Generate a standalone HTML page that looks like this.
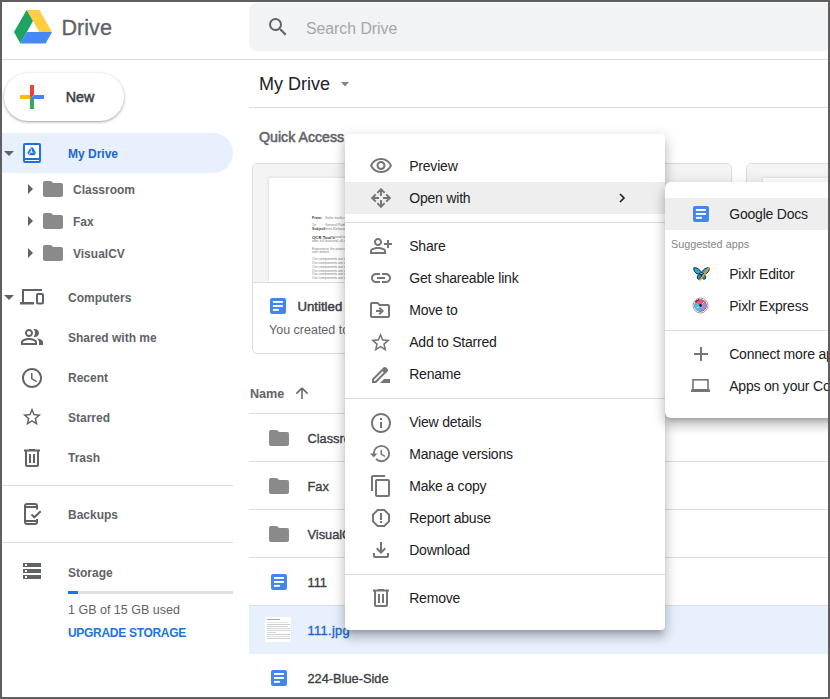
<!DOCTYPE html>
<html><head><meta charset="utf-8">
<style>
*{box-sizing:border-box}
html,body{margin:0;padding:0}
body{width:830px;height:699px;overflow:hidden;position:relative;background:#fff;font-family:"Liberation Sans",sans-serif;color:#202124}
.a{position:absolute}
.t{position:absolute;white-space:nowrap;line-height:1}
#frame{position:absolute;left:0;top:0;width:830px;height:699px;border:2px solid #5f5f5f;z-index:100}
.hl{position:absolute;height:1px;background:#dadce0}
.side{font-size:12px;font-weight:700;color:#5f6368}
.mtx{position:absolute;font-size:14px;letter-spacing:-0.2px;color:#202124;white-space:nowrap;line-height:1}
.ftx{position:absolute;font-size:12.8px;color:#3c4043;-webkit-text-stroke:0.35px currentColor;white-space:nowrap;line-height:1}
.dl{position:absolute;height:1px;background:#b8b8b8}
</style></head><body>
<div id="frame"></div>

<svg class="a" style="left:14px;top:10px" width="38" height="34" viewBox="0 0 38 34">
  <path d="M12.6 0 L25.4 0 L38 22 L25.4 22 Z" fill="#ffcd40"/>
  <path d="M12.6 0 L19 11 L6.4 33.5 L0 22 Z" fill="#1ea362"/>
  <path d="M6.4 33.5 L12.8 22 L38 22 L31.6 33.5 Z" fill="#4688f4"/>
</svg>
<div class="t" style="left:61.5px;top:16.8px;font-size:21.6px;color:#5f6368;-webkit-text-stroke:0.35px #5f6368">Drive</div>
<div class="hl" style="left:0;top:59px;width:830px"></div>
<div class="a" style="left:249px;top:3px;width:600px;height:48px;background:#f1f3f4;border-radius:8px"></div>

<svg class="a" style="left:266px;top:15px" width="24" height="24" viewBox="0 0 24 24"><path fill="#5f6368" d="M15.5 14h-.79l-.28-.27A6.471 6.471 0 0 0 16 9.5 6.5 6.5 0 1 0 9.5 16c1.61 0 3.09-.59 4.23-1.57l.27.28v.79l5 4.99L20.49 19l-4.99-5zm-6 0C7.01 14 5 11.99 5 9.5S7.01 5 9.5 5 14 7.01 14 9.5 11.99 14 9.5 14z" /></svg>
<div class="t" style="left:306px;top:20.8px;font-size:15.8px;color:#a4a7aa">Search Drive</div>
<div class="a" style="left:4px;top:73px;width:120px;height:48px;border-radius:24px;background:#fff;box-shadow:0 1px 2px 0 rgba(60,64,67,.3),0 1px 3px 1px rgba(60,64,67,.15)"></div>
<svg class="a" style="left:20px;top:85px" width="24" height="24" viewBox="0 0 24 24">
  <path d="M10 0h4v10L10 14z" fill="#ea4335"/>
  <rect x="10" y="14" width="4" height="10" fill="#34a853"/>
  <rect x="0" y="10" width="10" height="4" fill="#fbbc04"/>
  <path d="M14 10h10v4H10z" fill="#4285f4"/>
</svg>
<div class="t" style="left:65.8px;top:90px;font-size:14.3px;font-weight:400;color:#3c4043;-webkit-text-stroke:0.5px #3c4043">New</div>
<div class="a" style="left:2px;top:133px;width:231px;height:40px;background:#e8f0fe;border-radius:0 20px 20px 0"></div>

<svg class="a" style="left:4px;top:151px" width="10" height="5" viewBox="0 0 10 5"><path d="M0 0h10L5 5z" fill="#5f6368"/></svg>
<svg class="a" style="left:23px;top:143px" width="18" height="20" viewBox="0 0 18 20"><rect x="1" y="1" width="16" height="17" fill="#fff"/><path fill="#1a73e8" fill-rule="evenodd" d="M2 0h14a2 2 0 0 1 2 2v16a2 2 0 0 1-2 2H2a2 2 0 0 1-2-2V2a2 2 0 0 1 2-2zM2 2v13h14V2zM2 17v1h14v-1z"/>
<g transform="translate(4.1,4.6) scale(0.232)"><path d="M12.6 0 L25.4 0 L38 22 L25.4 22 Z" fill="#1a73e8"/><path d="M6.4 33.5 L12.8 22 L38 22 L31.6 33.5 Z" fill="#1a73e8"/><path d="M12.6 0 L19 11 L6.4 33.5 L0 22 Z" fill="#1a73e8" stroke="#fff" stroke-width="3"/><path d="M8 8 L4 15" stroke="#fff" stroke-width="0"/></g></svg>
<div class="t side" style="left:68px;top:148px;color:#1967d2">My Drive</div>
<svg class="a" style="left:28px;top:184px" width="5" height="10" viewBox="0 0 5 10"><path d="M0 0v10l5-5z" fill="#5f6368"/></svg>
<svg class="a" style="left:43px;top:181px" width="20" height="16" viewBox="0 0 20 16"><path d="M8 0H2C.9 0 0 .9 0 2v12c0 1.1.9 2 2 2h16c1.1 0 2-.9 2-2V4c0-1.1-.9-2-2-2h-8L8 0z" fill="#8a8a8a"/></svg>
<div class="t side" style="left:73px;top:184px">Classroom</div>
<svg class="a" style="left:28px;top:216px" width="5" height="10" viewBox="0 0 5 10"><path d="M0 0v10l5-5z" fill="#5f6368"/></svg>
<svg class="a" style="left:43px;top:213px" width="20" height="16" viewBox="0 0 20 16"><path d="M8 0H2C.9 0 0 .9 0 2v12c0 1.1.9 2 2 2h16c1.1 0 2-.9 2-2V4c0-1.1-.9-2-2-2h-8L8 0z" fill="#8a8a8a"/></svg>
<div class="t side" style="left:73px;top:216px">Fax</div>
<svg class="a" style="left:28px;top:248px" width="5" height="10" viewBox="0 0 5 10"><path d="M0 0v10l5-5z" fill="#5f6368"/></svg>
<svg class="a" style="left:43px;top:245px" width="20" height="16" viewBox="0 0 20 16"><path d="M8 0H2C.9 0 0 .9 0 2v12c0 1.1.9 2 2 2h16c1.1 0 2-.9 2-2V4c0-1.1-.9-2-2-2h-8L8 0z" fill="#8a8a8a"/></svg>
<div class="t side" style="left:73px;top:248px">VisualCV</div>
<svg class="a" style="left:4px;top:295px" width="10" height="5" viewBox="0 0 10 5"><path d="M0 0h10L5 5z" fill="#5f6368"/></svg>
<svg class="a" style="left:20px;top:289px" width="24" height="16" viewBox="0 0 24 16"><path fill="#5f6368" d="M2 0h20v2H4v11H2zM0 13h14v2.5H0z"/><rect x="17" y="5" width="6" height="9.5" rx="1" fill="none" stroke="#5f6368" stroke-width="2"/></svg>
<div class="t side" style="left:68px;top:292px">Computers</div>
<svg class="a" style="left:20px;top:325px" width="24" height="24" viewBox="0 0 24 24"><path fill="#5f6368" d="M15 8c0-1.42-.5-2.73-1.33-3.76.42-.14.86-.24 1.33-.24 2.21 0 4 1.79 4 4s-1.79 4-4 4c-.43 0-.84-.09-1.23-.21-.03-.01-.06-.02-.1-.03A5.98 5.98 0 0 0 15 8zm1.66 5.13C18.03 14.06 19 15.32 19 17v3h4v-3c0-2.18-3.58-3.47-6.34-3.87zM9 4c-2.21 0-4 1.79-4 4s1.79 4 4 4 4-1.79 4-4-1.79-4-4-4zm0 6c-1.1 0-2-.9-2-2s.9-2 2-2 2 .9 2 2-.9 2-2 2zm0 3c-2.67 0-8 1.34-8 4v3h16v-3c0-2.66-5.33-4-8-4zm6 5H3v-.99C3.2 16.29 6.3 15 9 15s5.8 1.29 6 2v1z" /></svg>
<div class="t side" style="left:68px;top:332px">Shared with me</div>
<svg class="a" style="left:20px;top:366px" width="24" height="24" viewBox="0 0 24 24"><path fill="#5f6368" d="M11.99 2C6.47 2 2 6.48 2 12s4.47 10 9.99 10C17.52 22 22 17.520 22 12S17.52 2 11.99 2zM12 20c-4.42 0-8-3.58-8-8s3.58-8 8-8 8 3.58 8 8-3.58 8-8 8zm.5-13H11v6l5.25 3.15.75-1.23-4.5-2.67z" /></svg>
<div class="t side" style="left:68px;top:372px">Recent</div>
<svg class="a" style="left:20.8px;top:406.2px" width="22" height="22" viewBox="0 0 24 24"><path fill="#5f6368" d="M22 9.24l-7.19-.62L12 2 9.19 8.63 2 9.24l5.46 4.73L5.82 21 12 17.27 18.18 21l-1.63-7.03L22 9.24zM12 15.4l-3.76 2.27 1-4.28-3.32-2.88 4.38-.38L12 6.1l1.71 4.04 4.38.38-3.32 2.88 1 4.28L12 15.4z"/></svg>
<div class="t side" style="left:68px;top:412px">Starred</div>
<svg class="a" style="left:20px;top:445.5px" width="24" height="24" viewBox="0 0 24 24"><path fill="#5f6368" d="M15 3.5V3H9v.5H4v2h1V19c0 1.1.9 2 2 2h10c1.1 0 2-.9 2-2V5.5h1v-2h-5zM17 19H7V5.5h10V19zM9 8h2v9H9zm4 0h2v9h-2z" /></svg>
<div class="t side" style="left:68px;top:452px">Trash</div>
<div class="hl" style="left:2px;top:485px;width:231px"></div>
<svg class="a" style="left:24px;top:503px" width="18" height="22" viewBox="0 0 18 22"><path fill="none" stroke="#5f6368" stroke-width="2" d="M13 6.5V3a2 2 0 0 0-2-2H3a2 2 0 0 0-2 2v16a2 2 0 0 0 2 2h8a2 2 0 0 0 2-2v-3M1 4h12M1 18h12M7.5 11.5l2.8 2.8 6.4-6"/></svg>
<div class="t side" style="left:68px;top:509px">Backups</div>
<div class="hl" style="left:2px;top:542px;width:231px"></div>
<svg class="a" style="left:23px;top:563px" width="18" height="16" viewBox="0 0 18 16"><path fill="#5f6368" fill-rule="evenodd" d="M0 0h18v4H0zM2 1v2h2V1zM0 6h18v4H0zM2 7v2h2V7zM0 12h18v4H0zM2 13v2h2v-2z"/></svg>
<div class="t side" style="left:68px;top:567px">Storage</div>
<div class="a" style="left:68px;top:591px;width:165px;height:3px;background:#e0e0e0"></div>
<div class="a" style="left:68px;top:591px;width:10px;height:3px;background:#1a73e8"></div>
<div class="t" style="left:68px;top:604px;font-size:12.5px;color:#5f6368">1 GB of 15 GB used</div>
<div class="t" style="left:68px;top:627px;font-size:12px;font-weight:700;color:#1a73e8;letter-spacing:-0.3px">UPGRADE STORAGE</div>
<div class="t" style="left:259px;top:75px;font-size:18px;color:#202124">My Drive</div>
<svg class="a" style="left:341px;top:82px" width="8" height="5" viewBox="0 0 8 5"><path d="M0 0h8L4 4.5z" fill="#80868b"/></svg>
<div class="hl" style="left:249px;top:107px;width:600px"></div>
<div class="t" style="left:259px;top:129.6px;font-size:14.2px;font-weight:400;color:#5f6368;-webkit-text-stroke:0.55px #5f6368">Quick Access</div>
<div class="a" style="left:252px;top:163px;width:233px;height:191px;border:1px solid #dadce0;border-radius:5px;overflow:hidden"><div class="a" style="left:0;top:0;width:231px;height:119px;background:#f4f4f4;border-bottom:1px solid #dadce0"></div><div class="a" style="left:16px;top:14px;width:215px;height:104px;background:#fff;box-shadow:-1px -1px 2px rgba(0,0,0,.08)"></div><div class="t" style="left:59px;top:52.7px;font-size:3.6px;font-weight:700;color:#333">From:</div><div class="t" style="left:72px;top:52.7px;font-size:3.4px;font-weight:400;color:#808080">Sales mailto:sales@ocrtools</div><div class="t" style="left:59px;top:60.2px;font-size:3.4px;font-weight:400;color:#808080">To:</div><div class="t" style="left:72px;top:60.2px;font-size:3.4px;font-weight:400;color:#808080">General Public</div><div class="t" style="left:59px;top:64.2px;font-size:3.6px;font-weight:700;color:#444">Subject:</div><div class="t" style="left:70.5px;top:64.2px;font-size:3.4px;font-weight:400;color:#808080">Press Release</div><div class="t" style="left:59px;top:71.7px;font-size:4.3px;font-weight:700;color:#333">OCR Tool's</div><div class="t" style="left:80px;top:72.2px;font-size:3.4px;font-weight:400;color:#808080">proud to announce</div><div class="t" style="left:59px;top:76.2px;font-size:3.4px;font-weight:400;color:#808080">offer full-featured, all-in-one OCR</div><div class="t" style="left:59px;top:83.7px;font-size:3.4px;font-weight:400;color:#808080">Experience the power of OCR like</div><div class="t" style="left:59px;top:87.2px;font-size:3.4px;font-weight:400;color:#808080">ever before.</div><div class="t" style="left:59px;top:94.0px;font-size:3.4px;font-weight:400;color:#808080">Our components are to be used with a wide range of</div><div class="t" style="left:59px;top:97.8px;font-size:3.4px;font-weight:400;color:#808080">Our components are to be used with a wide range of</div><div class="t" style="left:59px;top:101.7px;font-size:3.4px;font-weight:400;color:#808080">Our components are to be used with a wide range of</div><div class="t" style="left:59px;top:105.5px;font-size:3.4px;font-weight:400;color:#808080">Our components are to be used with a wide range of</div><div class="t" style="left:59px;top:109.2px;font-size:3.4px;font-weight:400;color:#808080">Our components are to be used with a wide range of</div><div class="t" style="left:59px;top:112.9px;font-size:3.4px;font-weight:400;color:#808080">Our components are to be used with a wide range of</div><svg class="a" style="left:17px;top:134px" width="16" height="16" viewBox="0 0 16 16"><rect width="16" height="16" rx="2" fill="#4285f4"/><rect x="2.9" y="3" width="10" height="1.9" fill="#fff"/><rect x="2.9" y="7" width="10" height="1.9" fill="#fff"/><rect x="2.9" y="10.9" width="6" height="1.9" fill="#fff"/></svg><div class="t" style="left:44.5px;top:136.3px;font-size:13.2px;font-weight:400;color:#3c4043;-webkit-text-stroke:0.45px #3c4043">Untitled</div><div class="t" style="left:16px;top:160.2px;font-size:12.5px;color:#5f6368">You created today</div></div>
<div class="a" style="left:499px;top:163px;width:233px;height:191px;border:1px solid #dadce0;border-radius:5px;overflow:hidden"><div class="a" style="left:0;top:0;width:231px;height:119px;background:#f4f4f4;border-bottom:1px solid #dadce0"></div></div>
<div class="a" style="left:746px;top:163px;width:233px;height:191px;border:1px solid #dadce0;border-radius:5px;overflow:hidden"><div class="a" style="left:0;top:0;width:231px;height:119px;background:#f4f4f4;border-bottom:1px solid #dadce0"></div><div class="a" style="left:16px;top:14px;width:215px;height:104px;background:#fff;box-shadow:-1px -1px 2px rgba(0,0,0,.08)"></div></div>
<div class="t" style="left:250px;top:387.5px;font-size:12.6px;font-weight:700;color:#5f6368">Name</div>
<svg class="a" style="left:294px;top:385px" width="16" height="16" viewBox="0 0 16 16"><path d="M8 3 L2.4 8.6 M8 3 L13.6 8.6 M8 3 V14" stroke="#5f6368" stroke-width="1.5" fill="none"/></svg>
<div class="hl" style="left:249px;top:413px;width:600px"></div>
<div class="a" style="left:249px;top:414px;width:600px;height:48px;border-bottom:1px solid #dadce0"></div>
<svg class="a" style="left:269px;top:430px" width="20" height="16" viewBox="0 0 20 16"><path d="M8 0H2C.9 0 0 .9 0 2v12c0 1.1.9 2 2 2h16c1.1 0 2-.9 2-2V4c0-1.1-.9-2-2-2h-8L8 0z" fill="#8a8a8a"/></svg>
<div class="ftx" style="left:307.5px;top:433px;color:#3c4043;">Classroom</div>
<div class="a" style="left:249px;top:462px;width:600px;height:48px;border-bottom:1px solid #dadce0"></div>
<svg class="a" style="left:269px;top:478px" width="20" height="16" viewBox="0 0 20 16"><path d="M8 0H2C.9 0 0 .9 0 2v12c0 1.1.9 2 2 2h16c1.1 0 2-.9 2-2V4c0-1.1-.9-2-2-2h-8L8 0z" fill="#8a8a8a"/></svg>
<div class="ftx" style="left:307.5px;top:481px;color:#3c4043;">Fax</div>
<div class="a" style="left:249px;top:510px;width:600px;height:48px;border-bottom:1px solid #dadce0"></div>
<svg class="a" style="left:269px;top:526px" width="20" height="16" viewBox="0 0 20 16"><path d="M8 0H2C.9 0 0 .9 0 2v12c0 1.1.9 2 2 2h16c1.1 0 2-.9 2-2V4c0-1.1-.9-2-2-2h-8L8 0z" fill="#8a8a8a"/></svg>
<div class="ftx" style="left:307.5px;top:529px;color:#3c4043;">VisualCV</div>
<div class="a" style="left:249px;top:558px;width:600px;height:48px;border-bottom:1px solid #dadce0"></div>
<svg class="a" style="left:271px;top:574px" width="16" height="16" viewBox="0 0 16 16"><rect width="16" height="16" rx="2" fill="#4285f4"/><rect x="2.9" y="3" width="10" height="1.9" fill="#fff"/><rect x="2.9" y="7" width="10" height="1.9" fill="#fff"/><rect x="2.9" y="10.9" width="6" height="1.9" fill="#fff"/></svg>
<div class="ftx" style="left:307.5px;top:577px;color:#3c4043;">111</div>
<div class="a" style="left:249px;top:606px;width:600px;height:48px;background:#e8f0fe;border-bottom:1px solid #e8f0fe"></div>
<div class="a" style="left:265px;top:617px;width:26px;height:25px;background:#fff"></div>
<div class="a" style="left:267px;top:619px;width:13px;height:1px;background:#aaa"></div>
<div class="a" style="left:267px;top:621.5px;width:20px;height:1px;background:#e4e4e4"></div>
<div class="a" style="left:267px;top:624px;width:23px;height:1px;background:#cfcfcf"></div>
<div class="a" style="left:267px;top:626px;width:21px;height:1px;background:#cfcfcf"></div>
<div class="a" style="left:267px;top:628px;width:23px;height:1px;background:#d6d6d6"></div>
<div class="a" style="left:267px;top:630px;width:23px;height:1px;background:#d6d6d6"></div>
<div class="a" style="left:267px;top:632px;width:9px;height:1px;background:#d6d6d6"></div>
<div class="a" style="left:267px;top:634px;width:23px;height:1px;background:#cfcfcf"></div>
<div class="a" style="left:267px;top:636px;width:23px;height:1px;background:#dcdcdc"></div>
<div class="a" style="left:267px;top:638px;width:23px;height:1px;background:#cfcfcf"></div>
<div class="ftx" style="left:307.5px;top:625px;color:#1967d2;letter-spacing:0.35px">111.jpg</div>
<div class="a" style="left:249px;top:654px;width:600px;height:48px;border-bottom:1px solid #dadce0"></div>
<svg class="a" style="left:271px;top:670px" width="16" height="16" viewBox="0 0 16 16"><rect width="16" height="16" rx="2" fill="#4285f4"/><rect x="2.9" y="3" width="10" height="1.9" fill="#fff"/><rect x="2.9" y="7" width="10" height="1.9" fill="#fff"/><rect x="2.9" y="10.9" width="6" height="1.9" fill="#fff"/></svg>
<div class="ftx" style="left:307.5px;top:673px;color:#3c4043;">224-Blue-Side</div>
<div class="a" style="left:345px;top:134px;width:320px;height:496px;background:#fff;border-radius:4px;box-shadow:0 8px 10px 1px rgba(0,0,0,.14),0 3px 14px 2px rgba(0,0,0,.12),0 5px 5px -3px rgba(0,0,0,.2);z-index:10">
<div class="a" style="left:0;top:16px;width:320px;height:32px;"><svg class="a" style="left:24px;top:4px" width="24" height="24" viewBox="0 0 24 24"><path fill="#757575" d="M12 6a9.77 9.77 0 0 1 8.82 5.5C19.17 14.87 15.79 17 12 17s-7.17-2.13-8.82-5.5A9.77 9.77 0 0 1 12 6m0-2C7 4 2.73 7.11 1 11.5 2.730 15.89 7 19 12 19s9.27-3.11 11-7.5C21.27 7.11 17 4 12 4zm0 5a2.5 2.5 0 0 1 0 5 2.5 2.5 0 0 1 0-5m0-2c-2.48 0-4.5 2.02-4.5 4.5S9.52 16 12 16s4.5-2.02 4.5-4.5S14.48 7 12 7z"/></svg><div class="mtx" style="left:64.2px;top:9.2px">Preview</div></div>
<div class="a" style="left:0;top:48px;width:320px;height:32px;background:#eeeeee;"><svg class="a" style="left:25.8px;top:5.8px" width="20" height="20" viewBox="0 0 20 20"><path fill="none" stroke="#757575" stroke-width="1.9" d="M10 1.5V8M10 12V18.5M1.5 10H8M12 10H18.5M6.4 4.8L10 1.2 13.6 4.8M6.4 15.2L10 18.8 13.6 15.2M4.8 6.4L1.2 10 4.8 13.6M15.2 6.4L18.8 10 15.2 13.6"/></svg><svg class="a" style="left:274px;top:59.5px" width="8" height="10"></svg><div class="mtx" style="left:64.2px;top:9.2px">Open with</div></div>
<svg class="a" style="left:273px;top:58px;z-index:2" width="10" height="12" viewBox="0 0 10 12"><path d="M2 2l4 4-4 4" stroke="#202124" stroke-width="1.7" fill="none"/></svg>
<div class="hl" style="left:0;top:88px;width:320px"></div>
<div class="a" style="left:0;top:96px;width:320px;height:32px;"><svg class="a" style="left:24px;top:4px" width="24" height="24" viewBox="0 0 24 24"><path fill="#757575" d="M20 6h-2v3h-3v2h3v3h2v-3h3V9h-3zM9 12c2.21 0 4-1.79 4-4s-1.79-4-4-4-4 1.79-4 4 1.79 4 4 4zm0-6c1.1 0 2 .9 2 2s-.9 2-2 2-2-.9-2-2 .9-2 2-2zm6.39 8.56C13.71 13.7 11.53 13 9 13s-4.71.7-6.390 1.56A2.970 2.970 0 0 0 1 17.22V20h16v-2.78c0-1.12-.61-2.15-1.61-2.66zM15 18H3v-.78c0-.38.2-.72.52-.88C4.71 15.73 6.63 15 9 15c2.36 0 4.29.73 5.48 1.34.32.16.52.5.52.88V18z"/></svg><div class="mtx" style="left:64.2px;top:9.2px">Share</div></div>
<div class="a" style="left:0;top:128px;width:320px;height:32px;"><svg class="a" style="left:24px;top:4px" width="24" height="24" viewBox="0 0 24 24"><path fill="#757575" d="M3.9 12c0-1.71 1.39-3.1 3.1-3.1h4V7H7c-2.76 0-5 2.24-5 5s2.24 5 5 5h4v-1.9H7c-1.71 0-3.1-1.39-3.1-3.1zM8 13h8v-2H8v2zm9-6h-4v1.9h4c1.71 0 3.1 1.39 3.1 3.1s-1.39 3.1-3.1 3.1h-4V17h4c2.76 0 5-2.24 5-5s-2.24-5-5-5z"/></svg><div class="mtx" style="left:64.2px;top:9.2px">Get shareable link</div></div>
<div class="a" style="left:0;top:160px;width:320px;height:32px;"><svg class="a" style="left:23px;top:4px" width="24" height="24" viewBox="0 0 24 24"><path fill="#757575" d="M20 6h-8l-2-2H4c-1.1 0-1.99.9-1.99 2L2 18c0 1.1.9 2 2 2h16c1.1 0 2-.9 2-2V8c0-1.1-.9-2-2-2zm0 12H4V6h5.17l2 2H20v10zm-7.84-6H8v2h4.16l-1.59 1.59L11.99 17 16 13.01 11.99 9l-1.41 1.41L12.16 12z"/></svg><div class="mtx" style="left:64.2px;top:9.2px">Move to</div></div>
<div class="a" style="left:0;top:192px;width:320px;height:32px;"><svg class="a" style="left:24.1px;top:5px" width="23" height="23" viewBox="0 0 24 24"><path fill="#757575" d="M22 9.24l-7.19-.62L12 2 9.19 8.63 2 9.24l5.46 4.73L5.82 21 12 17.27 18.18 21l-1.63-7.03L22 9.24zM12 15.4l-3.76 2.27 1-4.28-3.32-2.88 4.38-.38L12 6.1l1.71 4.04 4.38.38-3.32 2.88 1 4.28L12 15.4z"/></svg><div class="mtx" style="left:64.2px;top:9.2px">Add to Starred</div></div>
<div class="a" style="left:0;top:224px;width:320px;height:32px;"><svg class="a" style="left:24px;top:4.5px" width="24" height="24" viewBox="0 0 24 24"><path fill="#757575" d="M18.41 5.8L17.2 4.59c-.78-.78-2.05-.78-2.83 0l-2.68 2.68L3 15.96V20h4.04l8.74-8.74 2.63-2.63c.79-.78.79-2.05 0-2.83zM6.21 18H5v-1.21l8.66-8.66 1.21 1.21L6.21 18zM11 20l4-4h6v4H11z"/></svg><div class="mtx" style="left:64.2px;top:9.2px">Rename</div></div>
<div class="hl" style="left:0;top:264px;width:320px"></div>
<div class="a" style="left:0;top:272px;width:320px;height:32px;"><svg class="a" style="left:24px;top:4.5px" width="24" height="24" viewBox="0 0 24 24"><path fill="#757575" d="M11 7h2v2h-2zm0 4h2v6h-2zm1-9C6.48 2 2 6.48 2 12s4.48 10 10 10 10-4.48 10-10S17.52 2 12 2zm0 18c-4.41 0-8-3.59-8-8s3.59-8 8-8 8 3.59 8 8-3.59 8-8 8z"/></svg><div class="mtx" style="left:64.2px;top:9.2px">View details</div></div>
<div class="a" style="left:0;top:304px;width:320px;height:32px;"><svg class="a" style="left:24.2px;top:4px" width="23" height="23" viewBox="0 0 24 24"><path fill="#757575" d="M13 3a9 9 0 0 0-9 9H1l3.89 3.89.07.14L9 12H6c0-3.87 3.13-7 7-7s7 3.13 7 7-3.13 7-7 7c-1.93 0-3.68-.79-4.94-2.06l-1.42 1.42A8.954 8.954 0 0 0 13 21a9 9 0 0 0 0-18zm-1 5v5l4.28 2.54.72-1.21-3.5-2.08V8H12z"/></svg><div class="mtx" style="left:64.2px;top:9.2px">Manage versions</div></div>
<div class="a" style="left:0;top:336px;width:320px;height:32px;"><svg class="a" style="left:24px;top:4px" width="24" height="24" viewBox="0 0 24 24"><path fill="#757575" d="M16 1H4c-1.1 0-2 .9-2 2v14h2V3h12V1zm3 4H8c-1.1 0-2 .9-2 2v14c0 1.1.9 2 2 2h11c1.1 0 2-.9 2-2V7c0-1.1-.9-2-2-2zm0 16H8V7h11v14z"/></svg><div class="mtx" style="left:64.2px;top:9.2px">Make a copy</div></div>
<div class="a" style="left:0;top:368px;width:320px;height:32px;"><svg class="a" style="left:24.2px;top:4px" width="24" height="24" viewBox="0 0 24 24"><path fill="#757575" d="M15.73 3H8.27L3 8.27v7.46L8.27 21h7.46L21 15.73V8.27L15.73 3zM19 14.9L14.9 19H9.1L5 14.9V9.1L9.1 5h5.8L19 9.1v5.8zM11 7h2v7h-2zM11 15h2v2h-2z"/></svg><div class="mtx" style="left:64.2px;top:9.2px">Report abuse</div></div>
<div class="a" style="left:0;top:400px;width:320px;height:32px;"><svg class="a" style="left:23.7px;top:4px" width="24" height="24" viewBox="0 0 24 24"><path fill="#757575" d="M18 15v3H6v-3H4v3c0 1.1.9 2 2 2h12c1.1 0 2-.9 2-2v-3h-2zm-1-4l-1.41-1.41L13 12.17V4h-2v8.17L8.41 9.59 7 11l5 5 5-5z"/></svg><div class="mtx" style="left:64.2px;top:9.2px">Download</div></div>
<div class="hl" style="left:0;top:440px;width:320px"></div>
<div class="a" style="left:0;top:448px;width:320px;height:32px;"><svg class="a" style="left:24.2px;top:4px" width="24" height="24" viewBox="0 0 24 24"><path fill="#757575" d="M15 3.5V3H9v.5H4v2h1V19c0 1.1.9 2 2 2h10c1.1 0 2-.9 2-2V5.5h1v-2h-5zM17 19H7V5.5h10V19zM9 8h2v9H9zm4 0h2v9h-2z"/></svg><div class="mtx" style="left:64.2px;top:9.2px">Remove</div></div>
</div>
<div class="a" style="left:665px;top:182px;width:260px;height:236px;background:#fff;border-radius:6px;box-shadow:0 8px 10px 1px rgba(0,0,0,.14),0 3px 14px 2px rgba(0,0,0,.12),0 5px 5px -3px rgba(0,0,0,.2);z-index:11">
<div class="a" style="left:0;top:16px;width:260px;height:32px;background:#eeeeee;"><svg class="a" style="left:28px;top:8px" width="16" height="16" viewBox="0 0 16 16"><rect width="16" height="16" rx="2" fill="#4285f4"/><rect x="2.9" y="3" width="10" height="1.9" fill="#fff"/><rect x="2.9" y="7" width="10" height="1.9" fill="#fff"/><rect x="2.9" y="10.9" width="6" height="1.9" fill="#fff"/></svg><div class="mtx" style="left:64.2px;top:9.2px">Google Docs</div></div>
<div class="t" style="left:6px;top:57px;font-size:10.8px;color:#80868b">Suggested apps</div>
<div class="a" style="left:0;top:76px;width:260px;height:32px;"><svg class="a" style="left:27.5px;top:8.5px" width="17" height="14" viewBox="0 0 17 14">
<g stroke="#0d2a3a" stroke-width="1" stroke-linejoin="round">
<path d="M8.5 5.5 C6.5 2 3.5 0.3 0.8 0.8 C0.4 3.5 2 6.2 5.2 7.2 Z" fill="#2aa6dc"/>
<path d="M8.5 5.5 C10.5 2 13.5 0.3 16.2 0.8 C16.6 3.5 15 6.2 11.8 7.2 Z" fill="#2aa6dc"/>
<path d="M8.3 7 C6 7 3.8 8.5 4.3 11 C5 13 7.2 12.5 8.3 10 Z" fill="#1f8fc8"/>
<path d="M8.7 7 C11 7 13.2 8.5 12.7 11 C12 13 9.8 12.5 8.7 10 Z" fill="#1f8fc8"/>
</g>
<path d="M16.2 0.5 L6.8 13.5" stroke="#f39a1e" stroke-width="1.5"/></svg><div class="mtx" style="left:64.2px;top:9.2px">Pixlr Editor</div></div>
<div class="a" style="left:0;top:108px;width:260px;height:32px;"><svg class="a" style="left:27.2px;top:7.2px" width="17" height="17" viewBox="0 0 17 17">
<circle cx="8.5" cy="8.5" r="7.5" fill="#fff" stroke="#9a9a9a" stroke-width="1"/>
<circle cx="8.5" cy="8.5" r="5.9" fill="#a78bda" stroke="#5a4a55" stroke-width="0.7"/>
<path d="M8.5 8.5 L3.4 5.6 A5.9 5.9 0 0 1 13.6 5.6 Z" fill="#ea4f7e"/>
<path d="M8.5 8.5 L3.4 5.6 A5.9 5.9 0 0 0 8.5 14.4 Z" fill="#40c6e2"/>
<path d="M3.5 5.2 A5.9 5.9 0 0 1 7 2.7" stroke="#8a1030" stroke-width="1.3" fill="none"/>
<path d="M5 11 L8 9 M9.5 7.5 L12 5" stroke="#fff" stroke-width="0.9" opacity="0.8"/>
<circle cx="8.5" cy="8.5" r="1.4" fill="#222"/></svg><div class="mtx" style="left:64.2px;top:9.2px">Pixlr Express</div></div>
<div class="hl" style="left:0;top:148px;width:260px"></div>
<div class="a" style="left:0;top:156px;width:260px;height:32px;"><svg class="a" style="left:24px;top:4px" width="24" height="24" viewBox="0 0 24 24"><path fill="#757575" d="M19 13h-6v6h-2v-6H5v-2h6V5h2v6h6v2z"/></svg><div class="mtx" style="left:64.2px;top:9.2px">Connect more apps</div></div>
<div class="a" style="left:0;top:188px;width:260px;height:32px"><svg class="a" style="left:26px;top:9px" width="19" height="13" viewBox="0 0 19 13"><rect x="2" y="0.8" width="15" height="10" fill="none" stroke="#757575" stroke-width="1.6"/><rect x="0" y="10.4" width="19" height="2.6" fill="#757575"/></svg><div class="mtx" style="left:64.2px;top:9.2px">Apps on your Computer</div></div>
</div>
</body></html>
